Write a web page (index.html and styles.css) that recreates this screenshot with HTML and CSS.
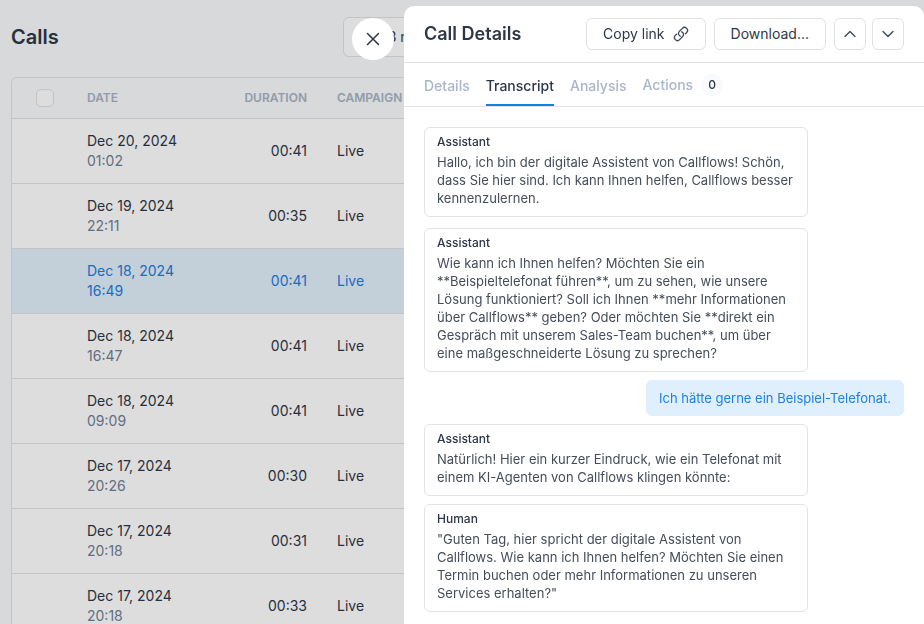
FILE: index.html
```html
<!DOCTYPE html>
<html lang="en">
<head>
<meta charset="utf-8">
<meta name="viewport" content="width=device-width, initial-scale=1">
<title>Calls</title>
<link rel="stylesheet" href="styles.css">
</head>
<body>
<main class="page">
  <header class="page-header">
    <h1 class="page-title">Calls</h1>
    <button class="range-button" type="button">Last 3 mo.</button>
  </header>
  <div class="table-card">
    <table class="calls">
      <colgroup><col class="col-check"><col class="col-date"><col class="col-duration"><col></colgroup>
      <thead>
        <tr>
          <th class="check-cell"><input class="checkbox" type="checkbox" aria-label="Select all calls"></th>
          <th>DATE</th>
          <th class="num">DURATION</th>
          <th>CAMPAIGN</th>
        </tr>
      </thead>
      <tbody>
        <tr><td></td><td>Dec 20, 2024<span class="time">01:02</span></td><td class="num">00:41</td><td>Live</td></tr>
        <tr><td></td><td>Dec 19, 2024<span class="time">22:11</span></td><td class="num">00:35</td><td>Live</td></tr>
        <tr class="selected"><td></td><td>Dec 18, 2024<span class="time">16:49</span></td><td class="num">00:41</td><td>Live</td></tr>
        <tr><td></td><td>Dec 18, 2024<span class="time">16:47</span></td><td class="num">00:41</td><td>Live</td></tr>
        <tr><td></td><td>Dec 18, 2024<span class="time">09:09</span></td><td class="num">00:41</td><td>Live</td></tr>
        <tr><td></td><td>Dec 17, 2024<span class="time">20:26</span></td><td class="num">00:30</td><td>Live</td></tr>
        <tr><td></td><td>Dec 17, 2024<span class="time">20:18</span></td><td class="num">00:31</td><td>Live</td></tr>
        <tr><td></td><td>Dec 17, 2024<span class="time">20:18</span></td><td class="num">00:33</td><td>Live</td></tr>
      </tbody>
    </table>
  </div>
</main>

<div class="overlay">
  <button class="close" type="button" aria-label="Close">
    <svg width="14" height="14" viewBox="0 0 14 14"><path d="M1.5 1.5l11 11M12.5 1.5l-11 11"/></svg>
  </button>
  <aside class="drawer" aria-label="Call Details">
    <header class="drawer-header">
      <h2 class="drawer-title">Call Details</h2>
      <div class="actions">
        <button class="button" type="button">Copy link
          <svg width="16" height="16" viewBox="0 0 24 24"><path d="M13.19 8.688a4.5 4.5 0 0 1 1.242 7.244l-4.5 4.5a4.5 4.5 0 0 1-6.364-6.364l1.757-1.757m13.35-.622 1.757-1.757a4.5 4.5 0 0 0-6.364-6.364l-4.5 4.5a4.5 4.5 0 0 0 1.242 7.244"/></svg>
        </button>
        <button class="button" type="button">Download...</button>
        <div class="stepper">
          <button class="button icon-button" type="button" aria-label="Previous call"><svg width="16" height="16" viewBox="0 0 24 24"><path d="m4.5 15.75 7.5-7.5 7.5 7.5"/></svg></button>
          <button class="button icon-button" type="button" aria-label="Next call"><svg width="16" height="16" viewBox="0 0 24 24"><path d="m19.5 8.25-7.5 7.5-7.5-7.5"/></svg></button>
        </div>
      </div>
    </header>
    <nav class="tabs">
      <a class="tab" href="#details">Details</a>
      <a class="tab active" href="#transcript" aria-current="page">Transcript</a>
      <a class="tab" href="#analysis">Analysis</a>
      <a class="tab counted" href="#actions">Actions <span class="count">0</span></a>
    </nav>
    <section class="transcript" id="transcript">
      <article class="message intro">
        <h3 class="speaker">Assistant</h3>
        <p>Hallo, ich bin der digitale Assistent von Callflows! Schön, dass Sie hier sind. Ich kann Ihnen helfen, Callflows besser kennenzulernen.</p>
      </article>
      <article class="message">
        <h3 class="speaker">Assistant</h3>
        <p>Wie kann ich Ihnen helfen? Möchten Sie ein **Beispieltelefonat führen**, um zu sehen, wie unsere Lösung funktioniert? Soll ich Ihnen **mehr Informationen über Callflows** geben? Oder möchten Sie **direkt ein Gespräch mit unserem Sales-Team buchen**, um über eine maßgeschneiderte Lösung zu sprechen?</p>
      </article>
      <article class="message reply">
        <p>Ich hätte gerne ein Beispiel-Telefonat.</p>
      </article>
      <article class="message">
        <h3 class="speaker">Assistant</h3>
        <p>Natürlich! Hier ein kurzer Eindruck, wie ein Telefonat mit einem KI-Agenten von Callflows klingen könnte:</p>
      </article>
      <article class="message">
        <h3 class="speaker">Human</h3>
        <p>"Guten Tag, hier spricht der digitale Assistent von Callflows. Wie kann ich Ihnen helfen? Möchten Sie einen Termin buchen oder mehr Informationen zu unseren Services erhalten?"</p>
      </article>
    </section>
  </aside>
</div>
</body>
</html>
```
FILE: styles.css
```css
* {
  box-sizing: border-box;
}

body {
  margin: 0;
  height: 100vh;
  overflow: hidden;
  background: #f9fbfd;
  color: #2d3748;
  font: 14px/20px Inter, "Liberation Sans", sans-serif;
}

h1, h2, h3, p {
  margin: 0;
}

button {
  font: inherit;
  color: inherit;
  cursor: pointer;
}

svg {
  display: block;
  fill: none;
  stroke: currentColor;
  stroke-width: 1.5;
  stroke-linecap: round;
  stroke-linejoin: round;
}

/* Calls list */
.page {
  padding: 17px 11px 0;
}

.page-header {
  display: grid;
  grid-template-columns: 332px 1fr;
  align-items: center;
  margin-bottom: 20px;
}

.page-title {
  font-size: 20px;
  line-height: 28px;
  font-weight: 600;
}

.range-button {
  justify-self: start;
  height: 40px;
  padding: 0 12px;
  border: 1px solid #e3e3e5;
  border-radius: 6px;
  background: #fff;
}

.table-card {
  border: 1px solid #e3e3e5;
  border-radius: 6px;
  overflow: hidden;
}

.calls {
  width: 100%;
  table-layout: fixed;
  border-spacing: 0;
}

.col-check {
  width: 60px;
}

.col-date {
  width: 150px;
}

.col-duration {
  width: 100px;
}

th {
  height: 41px;
  padding: 0 15px;
  border-bottom: 1px solid #e3e3e5;
  color: #a8b3c4;
  font-size: 12px;
  line-height: 16px;
  font-weight: 600;
  text-align: left;
}

td {
  height: 65px;
  padding: 0 15px;
  border-bottom: 1px solid #e3e3e5;
  background: #fff;
}

.check-cell {
  padding: 0 24px;
}

.num {
  text-align: right;
}

.time {
  display: block;
  color: #718096;
}

.selected td {
  background: #e1effb;
}

.selected td,
.selected .time {
  color: #1c7ddf;
}

.checkbox {
  display: block;
  appearance: none;
  width: 18px;
  height: 18px;
  margin: 0;
  border: 1px solid #e0e1e4;
  border-radius: 5px;
  background: #fff;
}

/* Drawer */
.overlay {
  position: fixed;
  inset: 0;
  display: flex;
  justify-content: flex-end;
  align-items: flex-start;
  gap: 10px;
  padding-top: 6px;
  background: rgba(0, 0, 0, 0.133);
}

.close {
  display: grid;
  place-items: center;
  flex: none;
  width: 42px;
  height: 42px;
  margin-top: 12px;
  padding: 0;
  border: 0;
  border-radius: 50%;
  background: #fff;
}

.drawer {
  width: 520px;
  height: 100%;
  border-radius: 10px 10px 0 0;
  background: #fff;
  overflow: hidden;
}

.drawer-header {
  display: flex;
  align-items: center;
  justify-content: space-between;
  padding: 12px 20px;
  border-bottom: 1px solid #e3e3e5;
}

.drawer-title {
  font-size: 18px;
  line-height: 28px;
  font-weight: 600;
}

.actions {
  display: flex;
  gap: 8px;
}

.stepper {
  display: flex;
  gap: 6px;
}

.button {
  display: flex;
  align-items: center;
  justify-content: center;
  gap: 8px;
  height: 32px;
  padding: 0 16px;
  border: 1px solid #e0e1e4;
  border-radius: 6px;
  background: #fff;
}

.button svg {
  color: #3c4656;
  stroke-width: 2;
}

.icon-button {
  width: 32px;
  padding: 0;
}

.tabs {
  display: flex;
  gap: 16px;
  padding: 0 20px;
  border-bottom: 1px solid #e3e3e5;
}

.tab {
  display: flex;
  align-items: center;
  gap: 8px;
  height: 43px;
  padding-top: 4px;
  border-bottom: 2px solid transparent;
  color: #a9b5c8;
  font-weight: 500;
  text-decoration: none;
}

.active {
  border-color: #0a84e0;
  color: #2d3748;
}

.counted {
  padding-top: 2px;
}

.count {
  min-width: 22px;
  border-radius: 11px;
  background: #f8fafc;
  color: #2d3748;
  font-size: 12px;
  line-height: 22px;
  text-align: center;
}

.transcript {
  display: flex;
  flex-direction: column;
  align-items: flex-start;
  gap: 8px;
  padding: 20px;
}

.message {
  max-width: 80%;
  padding: 5px 12px 9px;
  border: 1px solid #e3e3e5;
  border-radius: 6px;
  color: #454d5a;
  font-size: 13px;
  line-height: 18px;
}

.intro {
  margin-bottom: 3px;
}

.speaker {
  margin-bottom: 2px;
  color: #2d3748;
  font-size: 12px;
  line-height: 18px;
  font-weight: 500;
}

.reply {
  align-self: flex-end;
  padding: 8px 12px;
  border-color: #e0effd;
  background: #e0effd;
  color: #2080e0;
}
```
